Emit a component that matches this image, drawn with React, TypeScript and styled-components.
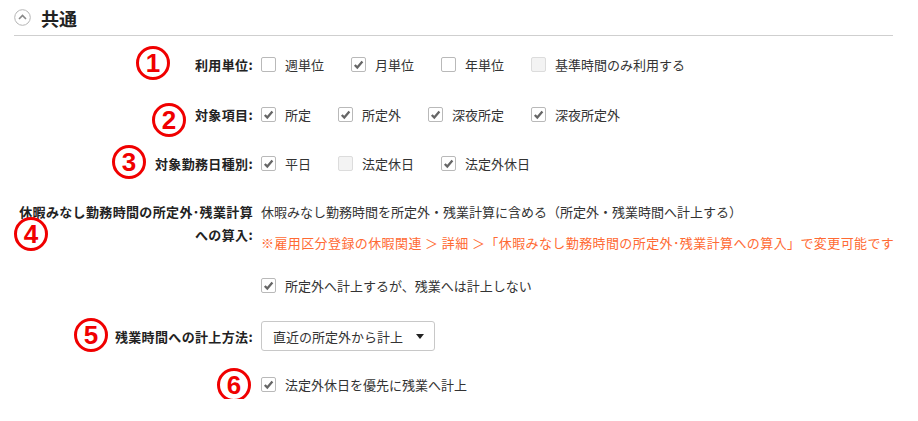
import React from "react";
import styled, { createGlobalStyle } from "styled-components";

const GlobalStyle = createGlobalStyle`
  body {
    margin: 0;
    background: #fff;
    font-family: "Noto Sans CJK JP", "Noto Sans", sans-serif;
    font-size: 13px;
    color: #333;
  }
`;

const Page = styled.div`
  width: 918px;
  padding: 0 25px 0 14px;
  box-sizing: border-box;
`;

const Header = styled.div`
  display: flex;
  align-items: center;
  gap: 10px;
  height: 35px;
  border-bottom: 1px solid #cfcfcf;
`;

const Title = styled.h2`
  margin: 0;
  font-size: 18px;
  font-weight: bold;
  color: #222;
  line-height: 1;
`;

const Form = styled.div`
  display: flex;
  flex-direction: column;
`;

const Row = styled.div<{ $top: number; $align?: string }>`
  position: relative;
  display: grid;
  grid-template-columns: 239px 1fr;
  column-gap: 8px;
  align-items: ${(p) => p.$align || "center"};
  margin-top: ${(p) => p.$top}px;
  min-height: 30px;
`;

const Label = styled.div`
  position: relative;
  text-align: right;
  font-weight: bold;
  color: #222;
  line-height: 23px;
  letter-spacing: 0.35px;
  white-space: nowrap;
`;

const Content = styled.div`
  display: flex;
  flex-direction: column;
`;

const Options = styled.div<{ $mt?: number }>`
  display: flex;
  align-items: center;
  margin-top: ${(p) => p.$mt || 0}px;
`;

const Option = styled.label`
  display: flex;
  align-items: center;
  gap: 9px;
  margin-right: 27px;
  line-height: 23px;
  color: #333;
`;

const Box = styled.span<{ $disabled?: boolean }>`
  display: inline-flex;
  align-items: center;
  justify-content: center;
  width: 15px;
  height: 15px;
  box-sizing: border-box;
  border: 1px solid ${(p) => (p.$disabled ? "#dcdcdc" : "#b9b9b9")};
  border-radius: 2px;
  background: ${(p) => (p.$disabled ? "#f3f3f3" : "#fff")};
`;

const Text = styled.div`
  line-height: 23px;
  white-space: nowrap;
`;

const Note = styled.div`
  line-height: 23px;
  margin-top: 8px;
  color: #ff6a33;
  letter-spacing: 0.4px;
  white-space: nowrap;
`;

const Select = styled.div`
  display: flex;
  align-items: center;
  justify-content: space-between;
  width: 174px;
  height: 30px;
  box-sizing: border-box;
  padding: 0 10px 0 11px;
  border: 1px solid #c8c8c8;
  border-radius: 3px;
  color: #333;
`;

const Caret = styled.span`
  width: 0;
  height: 0;
  border-left: 4px solid transparent;
  border-right: 4px solid transparent;
  border-top: 5px solid #222;
`;

const Mark = styled.span<{ $x: number; $y: number }>`
  position: absolute;
  left: ${(p) => p.$x}px;
  top: ${(p) => p.$y}px;
  width: 34px;
  height: 34px;
  box-sizing: border-box;
  border: 3px solid #f00000;
  border-radius: 50%;
  display: flex;
  align-items: center;
  justify-content: center;
  color: #f00000;
  font-family: "Liberation Sans", Arial, sans-serif;
  font-weight: bold;
  font-size: 26px;
  line-height: 1;
  pointer-events: none;
`;

const Check = () => (
  <svg width="11" height="11" viewBox="0 0 11 11">
    <path d="M1.8 6 L4.3 8.6 L9.4 2.6" fill="none" stroke="#666" strokeWidth="2.3" />
  </svg>
);

const CheckBox: React.FC<{ checked?: boolean; disabled?: boolean }> = ({ checked, disabled }) => (
  <Box $disabled={disabled}>{checked && <Check />}</Box>
);

const Chevron = () => (
  <svg width="17" height="17" viewBox="0 0 17 17">
    <circle cx="8.5" cy="8.5" r="7.8" fill="#fff" stroke="#b5b5b5" strokeWidth="1" />
    <path d="M5 10 L8.5 6.5 L12 10" fill="none" stroke="#888" strokeWidth="1.6" />
  </svg>
);

type Opt = { text: string; checked?: boolean; disabled?: boolean };

const OptionList: React.FC<{ items: Opt[] }> = ({ items }) => (
  <Options>
    {items.map((o) => (
      <Option key={o.text}>
        <CheckBox checked={o.checked} disabled={o.disabled} />
        {o.text}
      </Option>
    ))}
  </Options>
);

export default function App() {
  return (
    <Page>
      <GlobalStyle />
      <Header>
        <Chevron />
        <Title>共通</Title>
      </Header>
      <Form>
        <Row $top={13}>
          <Label>利用単位:</Label>
          <OptionList
            items={[
              { text: "週単位" },
              { text: "月単位", checked: true },
              { text: "年単位" },
              { text: "基準時間のみ利用する", disabled: true },
            ]}
          />
          <Mark $x={122} $y={-3}>1</Mark>
        </Row>
        <Row $top={20}>
          <Label>対象項目:</Label>
          <OptionList
            items={[
              { text: "所定", checked: true },
              { text: "所定外", checked: true },
              { text: "深夜所定", checked: true },
              { text: "深夜所定外", checked: true },
            ]}
          />
          <Mark $x={138} $y={4}>2</Mark>
        </Row>
        <Row $top={19}>
          <Label>対象勤務日種別:</Label>
          <OptionList
            items={[
              { text: "平日", checked: true },
              { text: "法定休日", disabled: true },
              { text: "法定外休日", checked: true },
            ]}
          />
          <Mark $x={98} $y={-3}>3</Mark>
        </Row>
        <Row $top={22} $align="start">
          <Label>
            休暇みなし勤務時間の所定外･残業計算
            <br />
            への算入:
          </Label>
          <Content>
            <Text>休暇みなし勤務時間を所定外・残業計算に含める（所定外・残業時間へ計上する）</Text>
            <Note>
              ※雇用区分登録の休暇関連 ＞ 詳細 ＞「休暇みなし勤務時間の所定外･残業計算への算入」で変更可能です
            </Note>
            <Options $mt={20}>
              <Option>
                <CheckBox checked />
                所定外へ計上するが、残業へは計上しない
              </Option>
            </Options>
          </Content>
          <Mark $x={0} $y={17}>4</Mark>
        </Row>
        <Row $top={24}>
          <Label>残業時間への計上方法:</Label>
          <div>
            <Select>
              直近の所定外から計上
              <Caret />
            </Select>
          </div>
          <Mark $x={60} $y={-3}>5</Mark>
        </Row>
        <Row $top={18}>
          <Label />
          <Options>
            <Option>
              <CheckBox checked />
              法定外休日を優先に残業へ計上
            </Option>
          </Options>
          <Mark $x={203} $y={-1}>6</Mark>
        </Row>
      </Form>
    </Page>
  );
}
